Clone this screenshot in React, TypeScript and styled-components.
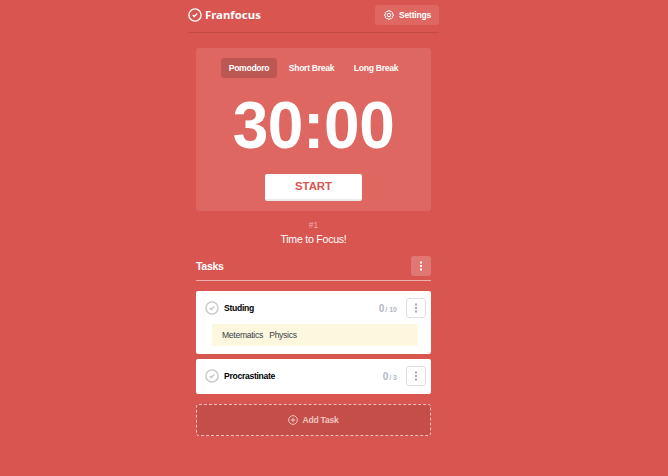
import React from "react";
import styled, { createGlobalStyle } from "styled-components";

const GlobalStyle = createGlobalStyle`
  * { box-sizing: border-box; }
  html, body { margin: 0; background: #d9554f; }
  body { font-family: "Liberation Sans", Arial, sans-serif; color: #fff; overflow: hidden; }
  button { font-family: inherit; border: 0; padding: 0; margin: 0; color: inherit; white-space: nowrap; }
`;

const Page = styled.div`
  width: 668px;
  height: 476px;
  padding-left: 188px;
  background: #d9554f;
`;

const Header = styled.header`
  width: 251px;
  height: 33px;
  padding-top: 5px;
  display: flex;
  justify-content: space-between;
  align-items: flex-start;
  border-bottom: 1px solid #bf4b46;
`;

const Brand = styled.div`
  display: flex;
  align-items: center;
  gap: 3px;
  height: 20px;
  font: 700 11.4px/20px "Noto Sans", "Open Sans", sans-serif;
`;

const SettingsButton = styled.button`
  display: flex;
  align-items: center;
  gap: 5px;
  width: 64px;
  height: 20px;
  padding: 0 0 1px 9px;
  border-radius: 3px;
  background: #df6762;
  font-size: 8.5px;
  letter-spacing: -0.2px;
  font-weight: 700;
`;

const Main = styled.main`
  width: 235px;
  margin: 15px 0 0 8px;
`;

const TimerCard = styled.section`
  height: 163px;
  padding-top: 10px;
  border-radius: 3px;
  background: #de6762;
  display: flex;
  flex-direction: column;
  align-items: center;
`;

const Tabs = styled.nav`
  display: flex;
  gap: 4px;
`;

const Tab = styled.button<{ $active?: boolean; $width: number }>`
  width: ${(p) => p.$width}px;
  height: 20px;
  padding-bottom: 1px;
  border-radius: 3px;
  background: ${(p) => (p.$active ? "#bd5753" : "transparent")};
  font-size: 8.6px;
  line-height: 18px;
  letter-spacing: -0.3px;
  font-weight: 700;
`;

const Clock = styled.div`
  margin-top: 10px;
  height: 74px;
  font-size: 64px;
  line-height: 74px;
  letter-spacing: -0.4px;
  font-weight: 700;
  transform: scaleY(1.05);
`;

const StartButton = styled.button`
  width: 97px;
  height: 27px;
  margin-top: 12px;
  padding-bottom: 1px;
  border-radius: 2px;
  border-bottom: 2px solid #ebebeb;
  background: #fff;
  color: #d9554f;
  font-size: 11.4px;
  line-height: 24px;
  font-weight: 700;
  letter-spacing: -0.05px;
`;

const Round = styled.div`
  margin-top: 8px;
  height: 13px;
  text-align: center;
  font-size: 8.5px;
  line-height: 13px;
  color: #eeb0ad;
`;

const Message = styled.div`
  height: 14px;
  text-align: center;
  font-size: 10.6px;
  line-height: 14px;
  letter-spacing: -0.25px;
`;

const TasksHeader = styled.div`
  display: flex;
  justify-content: space-between;
  align-items: flex-start;
  height: 25px;
  margin-top: 10px;
  border-bottom: 1px solid #edb2af;
`;

const TasksTitle = styled.h2`
  margin: 0;
  font-size: 10.7px;
  line-height: 21px;
  letter-spacing: -0.4px;
  font-weight: 700;
`;

const DotsButton = styled.button<{ $outlined?: boolean }>`
  display: flex;
  align-items: center;
  justify-content: center;
  width: 20px;
  height: 20px;
  border-radius: 3px;
  border: ${(p) => (p.$outlined ? "1px solid #dfdfdf" : "0")};
  background: ${(p) => (p.$outlined ? "#fff" : "#e17773")};
  color: ${(p) => (p.$outlined ? "#aaa" : "#fff")};
`;

const TaskCard = styled.article<{ $height: number; $top: number }>`
  height: ${(p) => p.$height}px;
  margin-top: ${(p) => p.$top}px;
  padding: 7px 5px 0 9px;
  border-radius: 2px;
  background: #fff;
`;

const TaskRow = styled.div`
  display: flex;
  align-items: center;
  height: 20px;
  color: #000;
`;

const TaskName = styled.span`
  flex: 1;
  margin-left: 5px;
  font-size: 8.6px;
  font-weight: 700;
  letter-spacing: -0.3px;
`;

const Count = styled.span`
  display: flex;
  align-items: baseline;
  gap: 1px;
  margin-right: 9px;
  font-size: 7px;
  font-weight: 700;
  color: #b3b7bf;
`;

const Done = styled.span`
  font-size: 10px;
`;

const Note = styled.div`
  width: 206px;
  height: 22px;
  margin: 6px 0 0 7px;
  padding-left: 10px;
  border-radius: 3px;
  background: #fcf7de;
  color: #39414c;
  font-size: 8.6px;
  line-height: 22px;
  letter-spacing: -0.3px;
  white-space: pre;
`;

const AddTask = styled.button`
  display: flex;
  align-items: center;
  justify-content: center;
  gap: 4px;
  width: 235px;
  height: 32px;
  margin-top: 10px;
  border: 1px dashed #efc0be;
  border-radius: 3px;
  background: #c64e49;
  color: #efc5c3;
  font-size: 8.6px;
  letter-spacing: -0.25px;
  font-weight: 700;
`;

const CheckIcon = ({ color = "#fff", size = 14 }: { color?: string; size?: number }) => (
  <svg width={size} height={size} viewBox="0 0 14 14" fill="none" stroke={color}>
    <circle cx="7" cy="7" r="6.1" strokeWidth="1.35" />
    <path d="M4.7 7.1 6.2 8.6 9.3 5.5" strokeWidth="1.35" />
  </svg>
);

const GearIcon = () => (
  <svg width="10" height="10" viewBox="0 0 20 20" fill="none" stroke="#fff" strokeWidth="2">
    <path d="m8 1.5 4 0 .7 2.1 2-.8 2.5 2.6-1 2 2.3.9v3.6l-2.2.8 1 2.1-2.6 2.5-2-1-.9 2.2H8.1l-.8-2.3-2.1 1-2.5-2.6 1-2-2.2-.8V8.2l2.2-.8-1-2 2.5-2.6 2 .8Z" />
    <circle cx="10" cy="10" r="3.4" />
  </svg>
);

const DotsIcon = () => (
  <svg width="2" height="10" viewBox="0 0 2 10" fill="currentColor">
    <rect y="0.5" width="2" height="2" />
    <rect y="4" width="2" height="2" />
    <rect y="7.5" width="2" height="2" />
  </svg>
);

const PlusIcon = () => (
  <svg width="10" height="10" viewBox="0 0 11 11" fill="none" stroke="currentColor" strokeWidth="1.1">
    <circle cx="5.5" cy="5.5" r="4.8" />
    <path d="M3 5.5h5M5.5 3v5" />
  </svg>
);

type TaskProps = {
  name: string;
  total: number;
  note?: string;
  height: number;
  top: number;
};

const Task = ({ name, total, note, height, top }: TaskProps) => (
  <TaskCard $height={height} $top={top}>
    <TaskRow>
      <CheckIcon color="#c6c6c6" />
      <TaskName>{name}</TaskName>
      <Count>
        <Done>0</Done>
        <span>/ {total}</span>
      </Count>
      <DotsButton $outlined>
        <DotsIcon />
      </DotsButton>
    </TaskRow>
    {note && <Note>{note}</Note>}
  </TaskCard>
);

export default function App() {
  return (
    <Page>
      <GlobalStyle />
      <Header>
        <Brand>
          <CheckIcon />
          <span>Franfocus</span>
        </Brand>
        <SettingsButton>
          <GearIcon />
          Settings
        </SettingsButton>
      </Header>
      <Main>
        <TimerCard>
          <Tabs>
            <Tab $active $width={56}>Pomodoro</Tab>
            <Tab $width={61}>Short Break</Tab>
            <Tab $width={60}>Long Break</Tab>
          </Tabs>
          <Clock>30:00</Clock>
          <StartButton>START</StartButton>
        </TimerCard>
        <Round>#1</Round>
        <Message>Time to Focus!</Message>
        <TasksHeader>
          <TasksTitle>Tasks</TasksTitle>
          <DotsButton>
            <DotsIcon />
          </DotsButton>
        </TasksHeader>
        <Task name="Studing" total={10} note="Metematics   Physics" height={63} top={10} />
        <Task name="Procrastinate" total={3} height={35} top={5} />
        <AddTask>
          <PlusIcon />
          Add Task
        </AddTask>
      </Main>
    </Page>
  );
}
